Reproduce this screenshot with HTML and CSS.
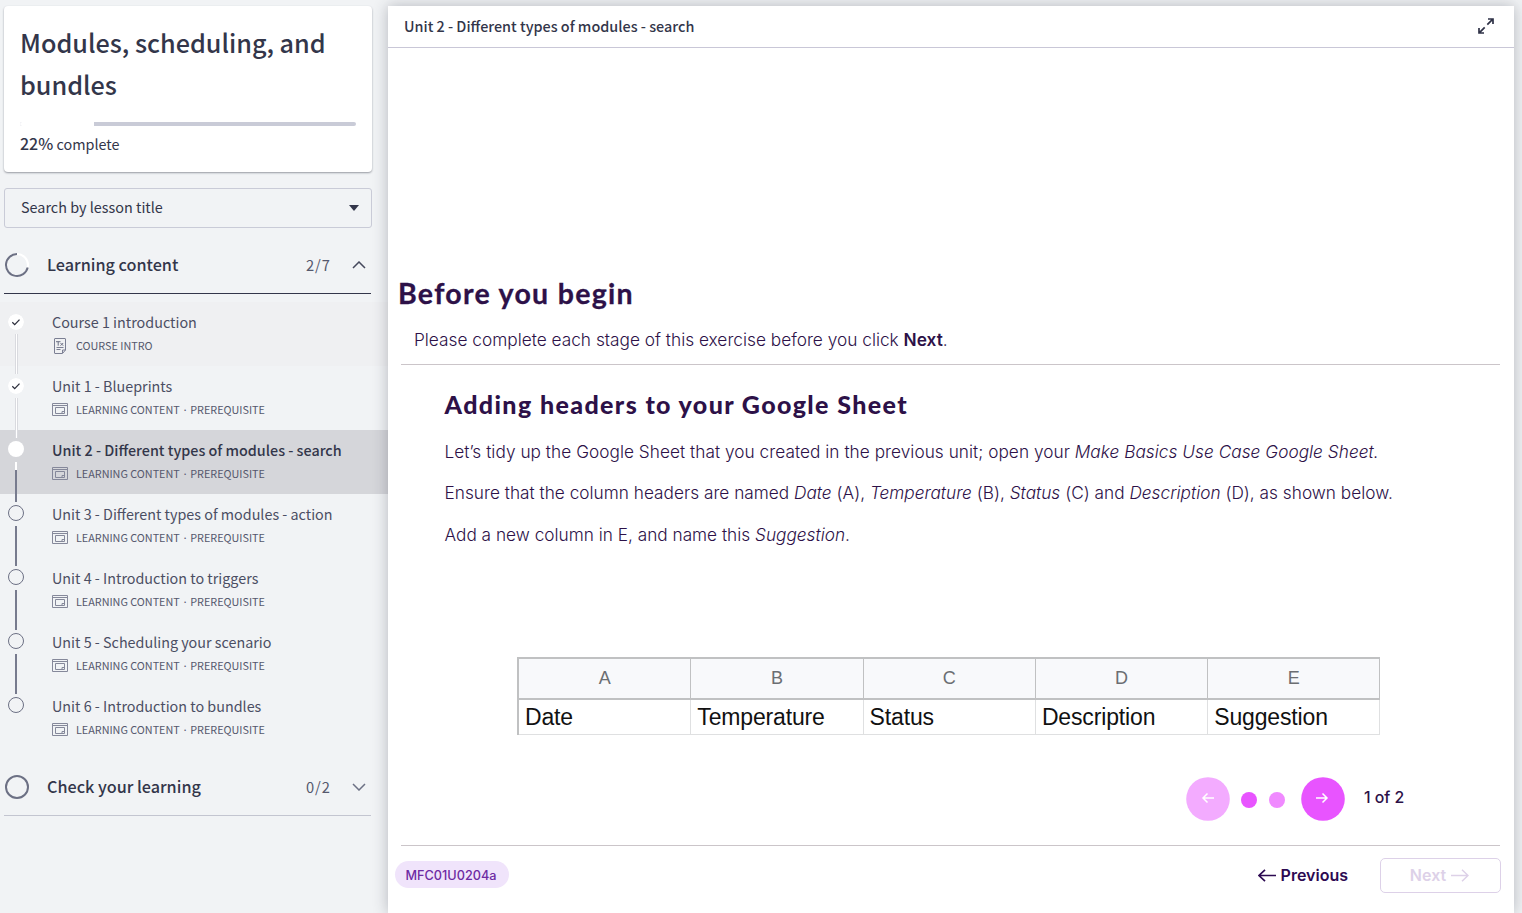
FILE: index.html
```html
<!DOCTYPE html>
<html lang="en">
<head>
<meta charset="utf-8">
<title>Modules, scheduling, and bundles</title>
<link rel="stylesheet" href="styles.css">
</head>
<body>
<svg class="defs" width="0" height="0" aria-hidden="true">
  <symbol id="icon-content" viewBox="0 0 16 13">
    <path d="M.5.5h15v12H.5zM.5 2.5h15M3.500 4.500h9v6h-9zM12.500 8.500h-2.500v2" fill="none" stroke="#85889a"/>
  </symbol>
  <symbol id="icon-check" viewBox="0 0 16 16">
    <circle cx="8" cy="8" r="8" fill="#fff"/>
    <path d="M4.300 8.300l2.400 2.300 4.800-5" fill="none" stroke="#2d2f3d" stroke-width="1.300"/>
  </symbol>
</svg>
<div class="app">
  <aside class="sidebar">
    <section class="card">
      <h1 class="card-title">Modules, scheduling, and<br>bundles</h1>
      <div class="progress"><div class="progress-done" style="width:22%"></div></div>
      <p class="progress-text"><b>22%</b> <span>complete</span></p>
    </section>
    <div class="search"><span>Search by lesson title</span><svg width="10" height="6"><path d="M0 0h10L5 6z" fill="#33364a"/></svg></div>
    <div class="group group-open">
      <svg class="ring" width="26" height="26"><circle cx="13" cy="13" r="11" fill="none" stroke="#fff" stroke-width="2"/><path d="M13 2A11 11 0 1 0 23.700 15.500" fill="none" stroke="#6c7084" stroke-width="2"/></svg>
      <span class="group-name">Learning content</span><span class="count">2/7</span>
      <svg width="14" height="8"><path d="M1 7l6-6 6 6" fill="none" stroke="#45485c" stroke-width="1.500"/></svg>
    </div>
    <ol class="lessons">
      <li class="lesson first"><div class="rail"><svg class="dot check" width="16" height="16"><use href="#icon-check"/></svg><i class="link done"></i></div><div><p class="name">Course 1 introduction</p><p class="meta"><svg width="16" height="16" viewBox="0 0 16 16"><path d="M3 .500h10q.500 0 .500.500v11l-3 3.500H3q-.500 0-.500-.500V1q0-.500.500-.500zM10.500 15v-3h3M4.500 9.500h7M4.500 11.500h4" fill="none" stroke="#7b7f93"/><path d="M4 3.700h4.500M6.200 3.700v4M8.500 5l2.700 2.700M11.200 5L8.500 7.700" fill="none" stroke="#6c7084"/></svg><span>COURSE INTRO</span></p></div></li>
      <li class="lesson"><div class="rail"><svg class="dot check" width="16" height="16"><use href="#icon-check"/></svg><i class="link done"></i></div><div><p class="name">Unit 1 - Blueprints</p><p class="meta"><svg width="16" height="13"><use href="#icon-content"/></svg><span>LEARNING CONTENT<em>·</em>PREREQUISITE</span></p></div></li>
      <li class="lesson current"><div class="rail"><i class="dot full"></i><i class="link half"></i></div><div><p class="name">Unit 2 - Different types of modules - search</p><p class="meta"><svg width="16" height="13"><use href="#icon-content"/></svg><span>LEARNING CONTENT<em>·</em>PREREQUISITE</span></p></div></li>
      <li class="lesson"><div class="rail"><i class="dot"></i><i class="link"></i></div><div><p class="name">Unit 3 - Different types of modules - action</p><p class="meta"><svg width="16" height="13"><use href="#icon-content"/></svg><span>LEARNING CONTENT<em>·</em>PREREQUISITE</span></p></div></li>
      <li class="lesson"><div class="rail"><i class="dot"></i><i class="link"></i></div><div><p class="name">Unit 4 - Introduction to triggers</p><p class="meta"><svg width="16" height="13"><use href="#icon-content"/></svg><span>LEARNING CONTENT<em>·</em>PREREQUISITE</span></p></div></li>
      <li class="lesson"><div class="rail"><i class="dot"></i><i class="link"></i></div><div><p class="name">Unit 5 - Scheduling your scenario</p><p class="meta"><svg width="16" height="13"><use href="#icon-content"/></svg><span>LEARNING CONTENT<em>·</em>PREREQUISITE</span></p></div></li>
      <li class="lesson"><div class="rail"><i class="dot"></i></div><div><p class="name">Unit 6 - Introduction to bundles</p><p class="meta"><svg width="16" height="13"><use href="#icon-content"/></svg><span>LEARNING CONTENT<em>·</em>PREREQUISITE</span></p></div></li>
    </ol>
    <div class="group">
      <svg class="ring" width="26" height="26"><circle cx="13" cy="13" r="11" fill="none" stroke="#6c7084" stroke-width="2"/></svg>
      <span class="group-name">Check your learning</span><span class="count">0/2</span>
      <svg width="14" height="8"><path d="M1 1l6 6 6-6" fill="none" stroke="#6c7084" stroke-width="1.500"/></svg>
    </div>
  </aside>
  <main class="main">
    <header class="topbar"><span>Unit 2 - Different types of modules - search</span>
      <svg width="16" height="16" viewBox="0 0 16 16"><path d="M9.300 6.700l5-5M10 1h5v5M6.700 9.300l-5 5M1 10v5h5" fill="none" stroke="#2f3247" stroke-width="1.700"/></svg>
    </header>
    <div class="intro">
      <h2 class="title">Before you begin</h2>
      <p class="lead">Please complete each stage of this exercise before you click <b>Next</b>.</p>
    </div>
    <article class="step">
      <h3 class="step-title">Adding headers to your Google Sheet</h3>
      <p class="l1">Let’s tidy up the Google Sheet that you created in the previous unit; open your <em>Make Basics Use Case Google Sheet.</em></p>
      <p class="l2">Ensure that the column headers are named <em>Date</em> (A), <em>Temperature</em> (B), <em>Status</em> (C) and <em>Description</em> (D), as shown below.</p>
      <p class="l3">Add a new column in E, and name this <em>Suggestion</em>.</p>
      <div class="sheet">
        <div class="col">A</div><div class="col">B</div><div class="col">C</div><div class="col">D</div><div class="col">E</div>
        <div class="cell">Date</div><div class="cell">Temperature</div><div class="cell">Status</div><div class="cell">Description</div><div class="cell">Suggestion</div>
      </div>
      <div class="pager">
        <svg class="round" width="44" height="44"><circle cx="22" cy="22" r="21.800" fill="#f3abff"/><path d="M28 21H17M21.500 16.500L17 21l4.500 4.500" fill="none" stroke="#fff" stroke-width="1.500"/></svg>
        <i class="page on"></i><i class="page"></i>
        <svg class="round next" width="44" height="44"><circle cx="22" cy="22" r="21.800" fill="#e854ff"/><path d="M15 21h11M21.500 16.500L26 21l-4.500 4.500" fill="none" stroke="#fff" stroke-width="1.500"/></svg>
        <span class="pages">1 of 2</span>
      </div>
    </article>
    <footer class="foot">
      <span class="code">MFC01U0204a</span>
      <span class="prev"><svg width="18" height="13"><path d="M18 6.500H1M7 .800L1 6.500l6 5.700" fill="none" stroke="#2d0a52" stroke-width="1.700"/></svg>Previous</span>
      <span class="nextbtn">Next<svg width="18" height="13"><path d="M0 6.500h17M11 .800l6 5.700-6 5.700" fill="none" stroke="#ddd1e8" stroke-width="1.500"/></svg></span>
    </footer>
  </main>
</div>
</body>
</html>
```
FILE: styles.css
```css
* { box-sizing: border-box; }
body { margin: 0; background: #f1f3f5; color: #33364a; font-family: "Noto Sans CJK SC", "Noto Sans", sans-serif; }
h1, h2, h3, p, ol { margin: 0; padding: 0; font-weight: inherit; }
svg { display: block; flex: none; }
.defs { position: absolute; }
.app { display: flex; height: 913px; overflow: hidden; padding: 6px 8px 0 0; white-space: nowrap; }
.sidebar { width: 388px; flex: none; }
.card { width: 368px; height: 166px; margin-left: 4px; padding: 15px 16px 0; background: #fff; border-radius: 4px; box-shadow: 0 1px 2px rgba(40, 44, 60, .45); }
.card-title { font-size: 25.200px; line-height: 42px; font-weight: 500; }
.progress { height: 4px; margin-top: 17px; border-radius: 2px; background: #c9cbd7; overflow: hidden; }
.progress-done { height: 4px; background: #fff; }
.progress-text { margin-top: 5px; font-size: 14.400px; line-height: 24px; }
.progress-text b { font-weight: 500; font-size: 16px; }
.search { display: flex; align-items: center; justify-content: space-between; width: 368px; height: 40px; margin: 16px 0 0 4px; padding: 0 12px 0 16px; border: 1px solid #c9cbd7; border-radius: 3px; font-size: 14.400px; }
.search span { padding-bottom: 4px; }
.group { display: flex; align-items: center; width: 367px; height: 57px; margin-left: 4px; border-bottom: 1px solid #c3c5d0; }
.group-open { margin-top: 9px; border-color: #33364a; }
.group-name { flex: 1; margin-left: 17px; padding-bottom: 2px; font-size: 16.200px; font-weight: 500; }
.count { margin-right: 21px; padding-bottom: 2px; font-size: 14.700px; letter-spacing: 1px; color: #55586d; }
.group > svg:last-child { margin-right: 5px; }
.lessons { list-style: none; margin-top: 8px; margin-bottom: 9px; }
.lesson { display: grid; grid-template-columns: 52px 1fr; height: 64px; color: #4b4e63; }
.first { background: #eff0f2; }
.current { background: #d5d6da; }
.name { margin-top: 8px; font-size: 14.350px; line-height: 24px; }
.current .name { font-weight: 500; color: #33364a; }
.meta { display: flex; align-items: center; gap: 8px; height: 23px; font-size: 10.800px; color: #55586d; }
.meta span { padding-bottom: 1px; }
.meta em { display: inline-block; width: 10.500px; text-align: center; font: 400 11px/1 Inter, sans-serif; }
.rail { position: relative; padding: 11px 0 0 8px; }
.dot { display: block; width: 16px; height: 16px; border: 1px solid #6c7084; border-radius: 50%; }
.check { border: 0; margin-top: 1px; }
.full { border: 0; background: #fff; }
.link { position: absolute; z-index: 1; left: 15px; top: 32px; width: 2px; height: 40px; background: #777b8e; }
.done { width: 3px; background: #fff; border: solid #d9dadf; border-width: 0 1px; }
.half { background: linear-gradient(#fff 8px, #777b8e 8px); }
.main { flex: 1; min-width: 0; background: #fff; box-shadow: 0 0 14px rgba(40, 44, 60, .3); font-family: Inter, sans-serif; color: #2d1148; }
.topbar { display: flex; align-items: center; justify-content: space-between; height: 42px; padding: 0 20px 2px 16px; border-bottom: 1px solid #c9c7d7; font: 500 14.380px "Noto Sans CJK SC", sans-serif; color: #33364a; }
.intro { height: 317px; margin: 0 14px 0 13px; padding-top: 227px; border-bottom: 1px solid #cbc5c9; }
.title { margin-left: -3px; font: 700 28.500px/36px Lato, sans-serif; letter-spacing: 1.300px; -webkit-text-stroke: .3px; }
.lead { margin: 15px 0 0 13px; font-size: 17.270px; line-height: 28px; font-weight: 300; }
.lead b { font-weight: 600; }
.step { height: 481px; margin: 0 14px 0 13px; padding-left: 43.500px; border-bottom: 1px solid #cbc5c9; font-size: 17.220px; line-height: 28px; font-weight: 300; }
.step-title { padding-top: 23px; font: 900 25px/32px Lato, sans-serif; letter-spacing: 1.380px; }
.l1 { margin-top: 18px; letter-spacing: .05px; }
.l2 { margin-top: 13px; letter-spacing: .023px; }
.l3 { margin-top: 14px; letter-spacing: .015px; }
.sheet { display: grid; grid-template-columns: repeat(5, 172.300px); width: 863px; margin: 108px 0 0 72.500px; font-family: "Liberation Sans", sans-serif; border-left: 2px solid #c0c1c2; font-weight: 400; }
.col { height: 43px; text-align: center; line-height: 39px; font-size: 18px; color: #6b6e72; background: #f8f9fb; border: solid #c0c1c2; border-width: 2px 1px 2px 0; }
.cell { height: 35px; padding-left: 6px; line-height: 35px; font-size: 23px; letter-spacing: -.15px; color: #111; border: solid #dfe0e1; border-width: 0 1px 1px 0; }
.pager { display: flex; align-items: center; height: 44px; margin: 42px 0 0 741.500px; }
.page { width: 16px; height: 16px; border-radius: 50%; margin: 2px 0 0 12px; background: #f08aff; }
.on { margin-left: 11px; background: #e854ff; }
.next { margin-left: 16px; }
.pages { margin: -2px 0 0 19px; font-size: 15.800px; font-weight: 500; }
.foot { display: flex; align-items: center; height: 58px; padding: 0 13px 0 7px; }
.code { height: 27px; margin-bottom: 2px; padding: 0 12.500px 0 10.500px; border-radius: 14px; background: #f0e4fb; color: #6e2ba3; font-size: 12.700px; line-height: 29px; font-weight: 500; }
.prev { display: flex; align-items: center; gap: 5px; margin-left: auto; font-size: 16px; font-weight: 600; color: #2d0a52; }
.nextbtn { display: flex; align-items: center; justify-content: center; gap: 5px; width: 121px; height: 35px; margin-left: 32px; padding-right: 2px; border: 1px solid #ddd1e8; border-radius: 5px; font-size: 16px; font-weight: 600; color: #ddd1e8; }
```
